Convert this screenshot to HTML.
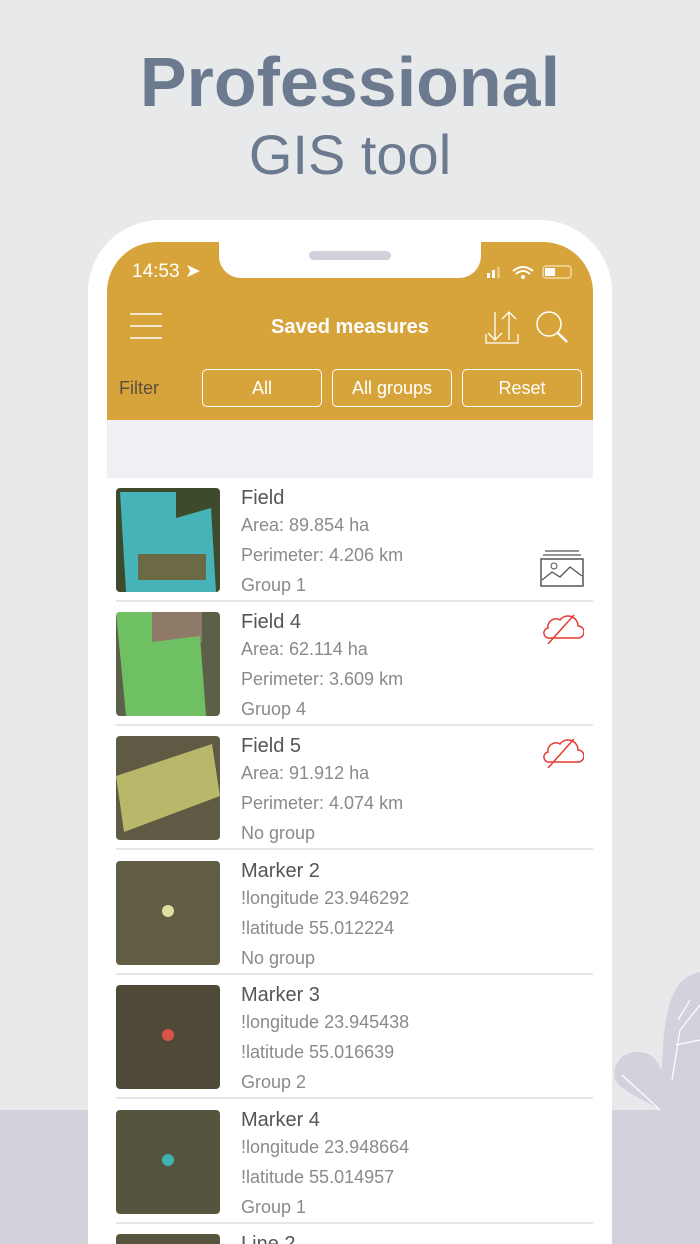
<!DOCTYPE html>
<html style="width:700px;height:1244px;overflow:hidden"><head><meta charset="utf-8"><style>
*{margin:0;padding:0;box-sizing:border-box}
body{width:700px;height:1244px;overflow:hidden;background:#e8e9eb;font-family:"Liberation Sans",sans-serif;position:relative}
.bot{position:absolute;left:0;right:0;top:1110px;height:134px;background:#d2d2dd}
.t1{position:absolute;top:42px;width:700px;text-align:center;font-size:70px;font-weight:bold;color:#6b7a8e;letter-spacing:0px}
.t2{position:absolute;top:122px;width:700px;text-align:center;font-size:56px;color:#6b7a8e}
.phone{position:absolute;left:88px;top:220px;width:524px;height:1024px;background:#fff;border-radius:72px 72px 0 0}
.screen{position:absolute;left:107px;top:242px;width:486px;height:1002px;background:#fff;border-radius:50px 50px 0 0;overflow:hidden}
.hdr{position:absolute;left:0;top:0;width:486px;height:178px;background:#d6a43a}
.notch{position:absolute;left:112px;top:-2px;width:262px;height:38px;background:#fff;border-radius:0 0 22px 22px}
.pill{position:absolute;left:202px;top:9px;width:82px;height:9px;background:#d1d1dc;border-radius:5px}
.time{position:absolute;left:25px;top:18px;color:#fff;font-size:19px}
.title{position:absolute;left:0;width:486px;top:74px;text-align:center;color:#fff;font-size:20px;font-weight:bold}
.filter{position:absolute;left:12px;top:136px;color:#5a5040;font-size:18px}
.btn{position:absolute;top:127px;height:38px;border:1.5px solid #fff;border-radius:5px;color:#fff;font-size:18px;text-align:center;line-height:36px}
.band{position:absolute;left:0;top:178px;width:486px;height:58px;background:#efeff4}
.row{position:absolute;left:9px;width:477px;height:124px;border-bottom:2px solid #e6e6e6}
.th{position:absolute;left:0;top:10px;width:104px;height:104px;border-radius:4px;overflow:hidden}
.txt{position:absolute;left:125px;top:5px;color:#8a8a8a;font-size:18px;line-height:30px}
.txt b{font-weight:normal;color:#555;font-size:20px;display:block;height:27px}
</style></head><body>
<div class="bot"></div>
<svg style="position:absolute;left:610px;top:970px" width="90" height="140"><path d="M90 2 C60 8 50 40 52 140 L90 140Z" fill="#d2d2dd"/><path d="M5 110 C0 90 20 75 40 85 C55 95 60 125 58 140 L50 140 C35 130 10 120 5 110Z" fill="#d2d2dd"/><path d="M68 50 L80 30 M62 110 L70 60 L90 35 M66 75 L90 70 M12 105 L50 140" stroke="#fff" stroke-width="1.2" fill="none"/></svg>
<div class="t1">Professional</div>
<div class="t2">GIS tool</div>
<div class="phone"></div>
<div class="screen">
<div class="hdr"></div>
<div class="notch"></div><div class="pill"></div>
<div class="time">14:53 ➤</div>
<svg style="position:absolute;left:378px;top:22px" width="90" height="16"><rect x="2" y="9" width="3" height="5" fill="#fff"/><rect x="7" y="6" width="3" height="8" fill="#fff"/><rect x="12" y="3" width="3" height="11" fill="#e8c77a"/><path d="M28 7 Q38 -1 48 7 M31 10 Q38 4 45 10" stroke="#fff" stroke-width="2" fill="none"/><circle cx="38" cy="13" r="2" fill="#fff"/><rect x="58" y="2" width="28" height="12" rx="3" fill="none" stroke="#f0d9a0" stroke-width="1.5"/><rect x="60" y="4" width="10" height="8" fill="#fff"/></svg>
<svg style="position:absolute;left:22px;top:70px" width="34" height="30"><path d="M1 2H33M1 14H33M1 26H33" stroke="#fff" stroke-width="1.5"/></svg>
<div class="title">Saved measures</div>
<svg style="position:absolute;left:378px;top:68px" width="34" height="34"><path d="M10 2V30M3 23L10 30L17 23M24 30V2M17 9L24 2L31 9M1 24V33H33V24" stroke="#fff" stroke-width="1.3" fill="none"/></svg>
<svg style="position:absolute;left:428px;top:68px" width="34" height="34"><circle cx="14" cy="14" r="12" stroke="#fff" stroke-width="1.5" fill="none"/><path d="M23 23L32 32" stroke="#fff" stroke-width="2.5"/></svg>
<div class="filter">Filter</div>
<div class="btn" style="left:95px;width:120px">All</div>
<div class="btn" style="left:225px;width:120px">All groups</div>
<div class="btn" style="left:355px;width:120px">Reset</div>
<div class="band"></div>

<div class="row" style="top:236px"><div class="th" style="background:#3e4a2c"><svg width="104" height="104"><path d="M4 4H60V30L95 20L100 104H10Z" fill="#46b3b8"/><rect x="22" y="66" width="68" height="26" fill="#6b6a45"/></svg></div>
<div class="txt"><b>Field</b>Area: 89.854 ha<br>Perimeter: 4.206 km<br>Group 1</div>
<svg style="position:absolute;left:424px;top:72px" width="44" height="38"><path d="M5 1H39M3 5H41" stroke="#555" stroke-width="1.3"/><rect x="1" y="9" width="42" height="27" fill="none" stroke="#555" stroke-width="1.5"/><circle cx="14" cy="16" r="3" fill="none" stroke="#555"/><path d="M2 30L12 22L20 27L30 17L42 26" stroke="#555" fill="none" stroke-width="1.3"/></svg></div>

<div class="row" style="top:360px"><div class="th" style="background:#5c6048"><svg width="104" height="104"><rect x="36" y="0" width="50" height="30" fill="#8e7a66"/><path d="M0 0H36V30L84 24L90 104H10Z" fill="#6fc062"/></svg></div>
<div class="txt"><b>Field 4</b>Area: 62.114 ha<br>Perimeter: 3.609 km<br>Gruop 4</div>
<svg style="position:absolute;left:424px;top:10px" width="44" height="32"><path d="M10 26H38A6 6 0 0 0 38 14A10 10 0 0 0 20 8A8 8 0 0 0 8 16A5 5 0 0 0 10 26Z M8 32L34 3" stroke="#e43b32" stroke-width="1.5" fill="none"/></svg></div>

<div class="row" style="top:484px"><div class="th" style="background:#5e5a44"><svg width="104" height="104"><path d="M0 40L96 8L104 60L8 96Z" fill="#b8b76a"/></svg></div>
<div class="txt"><b>Field 5</b>Area: 91.912 ha<br>Perimeter: 4.074 km<br>No group</div>
<svg style="position:absolute;left:424px;top:10px" width="44" height="32"><path d="M10 26H38A6 6 0 0 0 38 14A10 10 0 0 0 20 8A8 8 0 0 0 8 16A5 5 0 0 0 10 26Z M8 32L34 3" stroke="#e43b32" stroke-width="1.5" fill="none"/></svg></div>

<div class="row" style="top:609px"><div class="th" style="background:#615d45"><svg width="104" height="104"><circle cx="52" cy="50" r="6" fill="#dce0a0"/></svg></div>
<div class="txt"><b>Marker 2</b>!longitude 23.946292<br>!latitude 55.012224<br>No group</div></div>

<div class="row" style="top:733px"><div class="th" style="background:#4f4a38"><svg width="104" height="104"><circle cx="52" cy="50" r="6" fill="#d9534a"/></svg></div>
<div class="txt"><b>Marker 3</b>!longitude 23.945438<br>!latitude 55.016639<br>Group 2</div></div>

<div class="row" style="top:858px"><div class="th" style="background:#56533f"><svg width="104" height="104"><circle cx="52" cy="50" r="6" fill="#3fb3b0"/></svg></div>
<div class="txt"><b>Marker 4</b>!longitude 23.948664<br>!latitude 55.014957<br>Group 1</div></div>

<div class="row" style="top:982px"><div class="th" style="background:#56533f"></div>
<div class="txt"><b>Line 2</b></div></div>
</div>
</body></html>
